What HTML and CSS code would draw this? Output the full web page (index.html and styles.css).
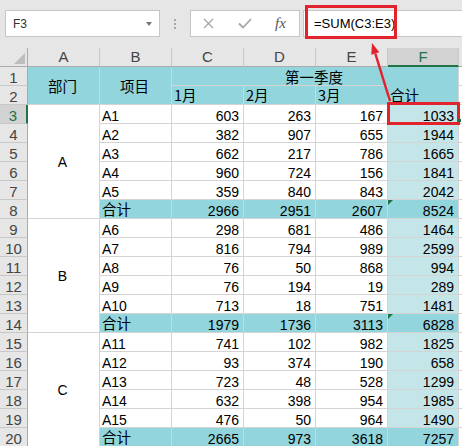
FILE: index.html
```html
<!DOCTYPE html>
<html>
<head>
    <title>季度汇总</title>
    <meta charset="UTF-8">
    <link rel="stylesheet" href="styles.css">
</head>
<body>
    <div class="toolbar">
        <div class="name-box">
            <span>F3</span>
            <span class="drop"></span>
        </div>
        <div class="grip"><i></i><i></i><i></i></div>
        <div class="fx-box">
            <svg class="ico-x" width="11" height="11" viewBox="0 0 11 11">
                <path d="M1 1L10 10M10 1L1 10" stroke="#a6a6a6" stroke-width="1.3" fill="none"/>
            </svg>
            <svg class="ico-ok" width="14" height="11" viewBox="0 0 14 11">
                <path d="M1 5.5L5 9.5L13 1" stroke="#a6a6a6" stroke-width="1.8" fill="none"/>
            </svg>
            <span class="fx">fx</span>
        </div>
        <div class="formula">=SUM(C3:E3)</div>
    </div>

    <div class="sheet">
        <div class="gh"></div>
        <div class="gb"></div>

        <!-- column headers -->
        <div class="ch corner"><span class="tri"></span></div>
        <div class="ch">A</div>
        <div class="ch">B</div>
        <div class="ch">C</div>
        <div class="ch">D</div>
        <div class="ch">E</div>
        <div class="ch sel">F</div>

        <!-- header rows -->
        <div class="rh">1</div>
        <div class="c hl zh mid span2">部门</div>
        <div class="c hl zh mid span2">项目</div>
        <div class="c hl zh q1">第一季度</div>
        <div class="rh">2</div>
        <div class="c hl zh">1月</div>
        <div class="c hl zh">2月</div>
        <div class="c hl zh">3月</div>
        <div class="c hl zh">合计</div>

        <!-- group A -->
        <div class="rh sel">3</div>
        <div class="c mid span6">A</div>
        <div class="c">A1</div><div class="c n">603</div><div class="c n">263</div><div class="c n">167</div><div class="c n lt">1033</div>
        <div class="rh">4</div>
        <div class="c">A2</div><div class="c n">382</div><div class="c n">907</div><div class="c n">655</div><div class="c n lt">1944</div>
        <div class="rh">5</div>
        <div class="c">A3</div><div class="c n">662</div><div class="c n">217</div><div class="c n">786</div><div class="c n lt">1665</div>
        <div class="rh">6</div>
        <div class="c">A4</div><div class="c n">960</div><div class="c n">724</div><div class="c n">156</div><div class="c n lt">1841</div>
        <div class="rh">7</div>
        <div class="c">A5</div><div class="c n">359</div><div class="c n">840</div><div class="c n">843</div><div class="c n lt">2042</div>
        <div class="rh">8</div>
        <div class="c hl zh">合计</div><div class="c n hl">2966</div><div class="c n hl">2951</div><div class="c n hl">2607</div><div class="c n hl err">8524</div>

        <!-- group B -->
        <div class="rh">9</div>
        <div class="c mid span6">B</div>
        <div class="c">A6</div><div class="c n">298</div><div class="c n">681</div><div class="c n">486</div><div class="c n lt">1464</div>
        <div class="rh">10</div>
        <div class="c">A7</div><div class="c n">816</div><div class="c n">794</div><div class="c n">989</div><div class="c n lt">2599</div>
        <div class="rh">11</div>
        <div class="c">A8</div><div class="c n">76</div><div class="c n">50</div><div class="c n">868</div><div class="c n lt">994</div>
        <div class="rh">12</div>
        <div class="c">A9</div><div class="c n">76</div><div class="c n">194</div><div class="c n">19</div><div class="c n lt">289</div>
        <div class="rh">13</div>
        <div class="c">A10</div><div class="c n">713</div><div class="c n">18</div><div class="c n">751</div><div class="c n lt">1481</div>
        <div class="rh">14</div>
        <div class="c hl zh">合计</div><div class="c n hl">1979</div><div class="c n hl">1736</div><div class="c n hl">3113</div><div class="c n hl err">6828</div>

        <!-- group C -->
        <div class="rh">15</div>
        <div class="c mid span6">C</div>
        <div class="c">A11</div><div class="c n">741</div><div class="c n">102</div><div class="c n">982</div><div class="c n lt">1825</div>
        <div class="rh">16</div>
        <div class="c">A12</div><div class="c n">93</div><div class="c n">374</div><div class="c n">190</div><div class="c n lt">658</div>
        <div class="rh">17</div>
        <div class="c">A13</div><div class="c n">723</div><div class="c n">48</div><div class="c n">528</div><div class="c n lt">1299</div>
        <div class="rh">18</div>
        <div class="c">A14</div><div class="c n">632</div><div class="c n">398</div><div class="c n">954</div><div class="c n lt">1985</div>
        <div class="rh">19</div>
        <div class="c">A15</div><div class="c n">476</div><div class="c n">50</div><div class="c n">964</div><div class="c n lt">1490</div>
        <div class="rh">20</div>
        <div class="c hl zh">合计</div><div class="c n hl">2665</div><div class="c n hl">973</div><div class="c n hl">3618</div><div class="c n hl">7257</div>
    </div>

    <!-- red annotation drawn over the sheet -->
    <svg class="marks" width="462" height="446" viewBox="0 0 462 446">
        <rect x="306.5" y="6.5" width="89" height="31" fill="none" stroke="#e3232c" stroke-width="3"/>
        <rect x="388.5" y="103.5" width="70" height="20" fill="none" stroke="#e3232c" stroke-width="3"/>
        <rect x="458" y="119" width="3" height="3" fill="#217346"/>
        <line x1="390" y1="101" x2="375.3" y2="53.5" stroke="#e3232c" stroke-width="2.5"/>
        <polygon points="372,43 379.3,52.3 371.3,54.7" fill="#e3232c"/>
    </svg>
</body>
</html>
```

FILE: styles.css
```css
body {
    margin: 0;
    width: 462px;
    height: 446px;
    overflow: hidden;
    position: relative;
    background: #e6e6e6;
    font-family: "Liberation Sans", "Noto Sans CJK SC", sans-serif;
    color: #000;
}

/* formula bar */
.toolbar {
    height: 48px;
    box-sizing: border-box;
    padding: 10px 0 0 5px;
    display: flex;
    align-items: flex-start;
}

.name-box {
    width: 155px;
    height: 27px;
    box-sizing: border-box;
    background: #fff;
    border: 1px solid #c6c6c6;
    padding: 0 7px;
    display: flex;
    align-items: center;
    justify-content: space-between;
    font-size: 12px;
    color: #333;
}

.drop {
    width: 0;
    height: 0;
    border-left: 3.5px solid transparent;
    border-right: 3.5px solid transparent;
    border-top: 4px solid #777;
}

.grip {
    width: 30px;
    padding-top: 9px;
    display: flex;
    flex-direction: column;
    align-items: center;
    gap: 2px;
}

.grip i {
    width: 2px;
    height: 2px;
    background: #a6a6a6;
}

.fx-box {
    width: 110px;
    height: 27px;
    box-sizing: border-box;
    background: #fff;
    border: 1px solid #c6c6c6;
    display: flex;
    align-items: center;
}

.ico-x {
    margin-left: 12px;
}

.ico-ok {
    margin-left: 24px;
}

.fx {
    margin-left: 23px;
    font-family: "Liberation Serif", serif;
    font-style: italic;
    font-size: 15px;
    color: #555;
}

.formula {
    flex: 1;
    margin-left: 3px;
    height: 27px;
    box-sizing: border-box;
    background: #fff;
    border: 1px solid #c6c6c6;
    border-right: none;
    padding-left: 10px;
    display: flex;
    align-items: center;
    font-size: 13px;
}

/* sheet grid */
.sheet {
    display: grid;
    grid-template-columns: 28px repeat(5, 72px) 71px 3px;
    grid-template-rows: repeat(21, 19px);
    font-size: 14px;
}

.ch {
    box-sizing: border-box;
    background: #e6e6e6;
    border-right: 1px solid #c8c8c8;
    border-bottom: 1px solid #ababab;
    display: flex;
    align-items: center;
    justify-content: center;
    font-size: 15px;
    line-height: 18px;
    color: #444;
}

.ch.sel {
    background: #d2d2d2;
    color: #217346;
    border-bottom: 2px solid #217346;
}

.corner {
    position: relative;
    border-right-color: #ababab;
}

.tri {
    position: absolute;
    right: 2px;
    bottom: 2px;
    width: 0;
    height: 0;
    border-left: 11px solid transparent;
    border-bottom: 11px solid #bdbdbd;
}

.gh {
    grid-column: 8;
    grid-row: 1;
    background: #e6e6e6;
    border-bottom: 1px solid #ababab;
}

.gb {
    grid-column: 8;
    grid-row: 2 / 22;
    background: repeating-linear-gradient(#fff 0 18px, #d4d4d4 18px 19px);
}

.rh {
    box-sizing: border-box;
    background: #e6e6e6;
    border-right: 1px solid #ababab;
    border-bottom: 1px solid #c8c8c8;
    display: flex;
    align-items: flex-end;
    justify-content: center;
    font-size: 15px;
    line-height: 14px;
    color: #444;
}

.rh.sel {
    background: #d2d2d2;
    color: #217346;
    border-right: 2px solid #217346;
}

.c {
    box-sizing: border-box;
    background: #fff;
    border-right: 1px solid #d4d4d4;
    border-bottom: 1px solid #d4d4d4;
    padding: 0 4px 0 2px;
    display: flex;
    align-items: flex-end;
    line-height: 13px;
    white-space: nowrap;
}

.n {
    justify-content: flex-end;
}

.zh {
    font-family: "Noto Sans CJK SC", sans-serif;
    font-size: 14.5px;
    line-height: 18px;
}

.mid {
    align-items: center;
    justify-content: center;
    line-height: 18px;
}

.span2 {
    grid-row: span 2;
}

.span6 {
    grid-row: span 6;
}

.hl {
    background: #92d5dd;
}

.lt {
    background: #c5e6e9;
}

.q1 {
    grid-column: span 4;
    align-items: center;
    justify-content: center;
    border-bottom: none;
    background: linear-gradient(#d4d4d4, #d4d4d4) left bottom / 216px 1px no-repeat, #92d5dd;
}

.err {
    position: relative;
}

.err::before {
    content: "";
    position: absolute;
    left: 0;
    top: 0;
    border-top: 5px solid #1e7145;
    border-right: 5px solid transparent;
}

.marks {
    position: absolute;
    left: 0;
    top: 0;
    pointer-events: none;
}
```
